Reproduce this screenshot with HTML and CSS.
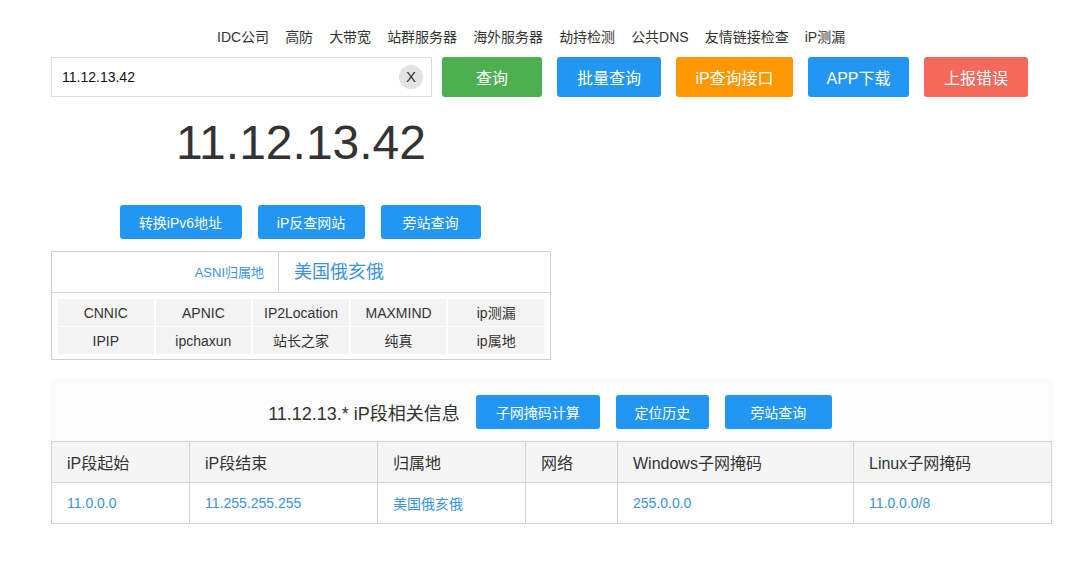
FILE: index.html
```html
<!DOCTYPE html>
<html lang="zh-CN">
<head>
<meta charset="utf-8">
<title>IP查询</title>
<link rel="stylesheet" href="styles.css">
</head>
<body>
<div class="page">
  <nav class="nav">
    <a>IDC公司</a><a>高防</a><a>大带宽</a><a>站群服务器</a><a>海外服务器</a><a>劫持检测</a><a>公共DNS</a><a>友情链接检查</a><a>iP测漏</a>
  </nav>

  <div class="search-row">
    <div class="search-box">
      <input class="search-input" type="text" value="11.12.13.42">
      <span class="clear-btn">X</span>
    </div>
    <button class="btn btn-lg green w100">查询</button>
    <button class="btn btn-lg blue w104">批量查询</button>
    <button class="btn btn-lg orange w117">iP查询接口</button>
    <button class="btn btn-lg blue w101">APP下载</button>
    <button class="btn btn-lg red w104">上报错误</button>
  </div>

  <div class="left-col">
    <div class="big-ip">11.12.13.42</div>
    <div class="tool-row">
      <button class="btn btn-sm blue w122">转换iPv6地址</button>
      <button class="btn btn-sm blue w107">iP反查网站</button>
      <button class="btn btn-sm blue w100">旁站查询</button>
    </div>
    <div class="asn">
      <div class="asn-head">
        <div class="asn-label">ASNI归属地</div>
        <div class="asn-value">美国俄亥俄</div>
      </div>
      <div class="asn-grid">
        <div class="src">CNNIC</div>
        <div class="src">APNIC</div>
        <div class="src">IP2Location</div>
        <div class="src">MAXMIND</div>
        <div class="src">ip测漏</div>
        <div class="src">IPIP</div>
        <div class="src">ipchaxun</div>
        <div class="src">站长之家</div>
        <div class="src">纯真</div>
        <div class="src">ip属地</div>
      </div>
    </div>
  </div>

  <div class="segment">
    <div class="seg-title-row">
      <span class="seg-title">11.12.13.* iP段相关信息</span>
      <button class="btn btn-sm blue w124">子网掩码计算</button>
      <button class="btn btn-sm blue w93">定位历史</button>
      <button class="btn btn-sm blue w107">旁站查询</button>
    </div>
  </div>
  <table class="seg-table">
    <colgroup>
      <col class="c1"><col class="c2"><col class="c3"><col class="c4"><col class="c5"><col class="c6">
    </colgroup>
    <thead>
      <tr><th>iP段起始</th><th>iP段结束</th><th>归属地</th><th>网络</th><th>Windows子网掩码</th><th>Linux子网掩码</th></tr>
    </thead>
    <tbody>
      <tr><td>11.0.0.0</td><td>11.255.255.255</td><td>美国俄亥俄</td><td></td><td>255.0.0.0</td><td>11.0.0.0/8</td></tr>
    </tbody>
  </table>
</div>
</body>
</html>
```

FILE: styles.css
```css
* { box-sizing: border-box; }
html, body { margin: 0; padding: 0; background: #fff; }
body {
  font-family: "Liberation Sans", "Noto Sans CJK SC", sans-serif;
  color: #333;
}
.page {
  width: 1002px;
  margin-left: 51px;
}
.nav {
  display: flex;
  gap: 16px;
  padding-left: 166px;
  padding-top: 28px;
  height: 57px;
  font-size: 14px;
  line-height: 18px;
}
.nav a { color: #333; white-space: nowrap; }

.search-row {
  display: flex;
  align-items: center;
  height: 40px;
}
.search-box {
  position: relative;
  width: 381px;
  height: 40px;
  margin-right: 10px;
}
.search-input {
  width: 100%;
  height: 40px;
  border: 1px solid #dcdcdc;
  padding: 0 40px 0 10px;
  font-family: "Liberation Sans", "Noto Sans CJK SC", sans-serif;
  font-size: 14px;
  color: #111;
  outline: none;
}
.clear-btn {
  position: absolute;
  right: 9px;
  top: 8px;
  width: 24px;
  height: 24px;
  border-radius: 50%;
  background: #e3e3e3;
  color: #333;
  font-size: 15px;
  line-height: 24px;
  text-align: center;
}

.btn {
  border: 0;
  border-radius: 3px;
  color: #fff;
  font-family: "Liberation Sans", "Noto Sans CJK SC", sans-serif;
  padding: 0;
  text-align: center;
  white-space: nowrap;
}
.btn-lg { height: 40px; font-size: 16px; margin-right: 15px; }
.btn-sm { height: 34px; font-size: 14px; }
.green { background: #4caf50; }
.blue { background: #2196f3; }
.orange { background: #ff9800; }
.red { background: #f5695a; }
.w93 { width: 93px; }
.w100 { width: 100px; }
.w101 { width: 101px; }
.w104 { width: 104px; }
.w107 { width: 107px; }
.w117 { width: 117px; }
.w122 { width: 122px; }
.w124 { width: 124px; }

.left-col { width: 500px; }
.big-ip {
  margin-top: 16px;
  font-size: 48px;
  line-height: 60px;
  text-align: center;
  color: #333;
}
.tool-row {
  display: flex;
  justify-content: center;
  gap: 16px;
  margin-top: 32px;
  padding-right: 2px;
}
.asn {
  margin-top: 12px;
  border: 1px solid #cfcfcf;
}
.asn-head {
  display: flex;
  height: 41px;
  border-bottom: 1px solid #d4d4d4;
}
.asn-label {
  width: 227px;
  border-right: 1px solid #d4d4d4;
  text-align: right;
  padding-right: 14px;
  font-size: 13px;
  line-height: 42px;
  color: #3b93d9;
}
.asn-value {
  padding-left: 15px;
  font-size: 18px;
  line-height: 40px;
  color: #3b93d9;
}
.asn-grid {
  display: grid;
  grid-template-columns: repeat(5, 1fr);
  gap: 1px 2px;
  padding: 6px 6px 5px;
}
.src {
  height: 27px;
  background: #f3f3f3;
  text-align: center;
  font-size: 14px;
  line-height: 28px;
  color: #333;
}

.segment {
  margin-top: 18px;
  background: #fcfcfc;
  padding: 17px 0 12px;
}
.seg-title-row {
  display: flex;
  align-items: center;
  justify-content: center;
  gap: 16px;
  padding-right: 4px;
}
.seg-title {
  font-size: 18px;
  color: #333;
}
.seg-table {
  width: 1000px;
  border-collapse: collapse;
  table-layout: fixed;
}
.c1 { width: 138px; }
.c2 { width: 188px; }
.c3 { width: 148px; }
.c4 { width: 92px; }
.c5 { width: 236px; }
.c6 { width: 198px; }
.seg-table th, .seg-table td {
  border: 1px solid #d2d2d2;
  height: 41px;
  padding: 0 0 0 15px;
  text-align: left;
  font-weight: normal;
}
.seg-table th {
  background: #f5f5f5;
  font-size: 16px;
  color: #333;
}
.seg-table td {
  font-size: 14px;
  color: #3b93d9;
}
```
